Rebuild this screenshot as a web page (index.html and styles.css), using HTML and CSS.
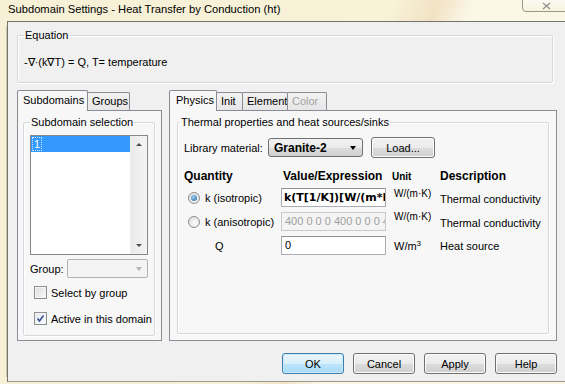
FILE: index.html
```html
<!DOCTYPE html>
<html>
<head>
<meta charset="utf-8">
<link rel="stylesheet" href="styles.css">
</head>
<body>
<div class="window">
  <div class="titlebar">
    <span class="title">Subdomain Settings - Heat Transfer by Conduction (ht)</span>
    <div class="close"><svg width="9" height="8" viewBox="0 0 9 8"><path d="M1 1 L8 7 M8 1 L1 7" stroke="#8f8f8f" stroke-width="1.2" fill="none"/></svg></div>
  </div>
  <div class="frame">
    <div class="client">
      <fieldset class="group eq">
        <legend>Equation</legend>
        <div class="eqtext">-&#8711;&middot;(k&#8711;T) = Q, T= temperature</div>
      </fieldset>

      <div class="panes">
        <div class="tabctl left">
          <div class="tabs">
            <div class="tab active t-sub">Subdomains</div>
            <div class="tab t-grp">Groups</div>
          </div>
          <div class="tabpanel">
            <fieldset class="group sel">
              <legend>Subdomain selection</legend>
              <div class="listbox">
                <div class="items">
                  <div class="item selected"><span class="focus">1</span></div>
                </div>
                <div class="vscroll">
                  <span class="arr up"></span>
                  <span class="arr down"></span>
                </div>
              </div>
              <div class="grouprow">
                <span class="lbl">Group:</span>
                <div class="combo disabled"><span class="carrow light"></span></div>
              </div>
              <label class="check first"><span class="box"></span>Select by group</label>
              <label class="check"><span class="box checked"><svg width="9" height="9" viewBox="0 0 9 9"><path d="M1.5 4.5 L3.5 7 L7.5 1.5" stroke="#3b4f8c" stroke-width="1.6" fill="none"/></svg></span>Active in this domain</label>
            </fieldset>
          </div>
        </div>

        <div class="tabctl right">
          <div class="tabs">
            <div class="tab active t-phy">Physics</div>
            <div class="tab t-init">Init</div>
            <div class="tab t-el">Element</div>
            <div class="tab t-col dis">Color</div>
          </div>
          <div class="tabpanel">
            <fieldset class="group thermal">
              <legend>Thermal properties and heat sources/sinks</legend>
              <div class="librow">
                <span class="lbl lib">Library material:</span>
                <div class="combo mat"><span class="ctext">Granite-2</span><span class="carrow"></span></div>
                <button class="btn load">Load...</button>
              </div>
              <div class="qtable">
                <div class="hd">Quantity</div>
                <div class="hd val">Value/Expression</div>
                <div class="hd unit">Unit</div>
                <div class="hd">Description</div>

                <div class="q"><span class="radio on"></span>k (isotropic)</div>
                <div class="inp bold">k(T[1/K])[W/(m*K)]</div>
                <div class="unit u">W/(m&middot;K)</div>
                <div class="desc">Thermal conductivity</div>

                <div class="q"><span class="radio"></span>k (anisotropic)</div>
                <div class="inp dis">400 0 0 0 400 0 0 0 400</div>
                <div class="unit u">W/(m&middot;K)</div>
                <div class="desc">Thermal conductivity</div>

                <div class="q qq">Q</div>
                <div class="inp">0</div>
                <div class="unit u3">W/m<sup>3</sup></div>
                <div class="desc d3">Heat source</div>
              </div>
            </fieldset>
          </div>
        </div>
      </div>

      <div class="buttons">
        <button class="btn def">OK</button>
        <button class="btn">Cancel</button>
        <button class="btn">Apply</button>
        <button class="btn">Help</button>
      </div>
    </div>
  </div>
</div>
</body>
</html>
```

FILE: styles.css
```css
* { box-sizing: border-box; }
html, body { margin: 0; padding: 0; }
body {
  font-family: "Liberation Sans", Arial, sans-serif;
  font-size: 11px;
  color: #000;
  background: #f0f0f0;
}
.window {
  width: 565px;
  height: 384px;
  overflow: hidden;
  position: relative;
  background: linear-gradient(112deg, #f6f1d6 0%, #f7f2d8 55%, #f2e2c4 61%, #fbf8e8 66%, #faf7e2 100%);
}
.titlebar {
  height: 21px;
  display: flex;
  align-items: center;
  padding-left: 8px;
  padding-bottom: 3px;
}
.title {
  font-size: 11.2px;
  color: #000;
}
.close {
  position: absolute;
  left: 522px;
  top: -2px;
  width: 60px;
  height: 14px;
  border: 1px solid #9a9789;
  border-radius: 0 0 0 4px;
  background: linear-gradient(#fdfcf3, #f6f3df);
  display: flex;
  justify-content: flex-start;
  align-items: center;
  padding: 2px 0 0 19px;
}
.frame {
  padding-left: 2px;
  height: 361px;
}
.client {
  margin-left: 5px;
  width: 600px;
  height: 361px;
  background: #f0f0f0;
  border-left: 1px solid #74736c;
  border-top: 1px solid #74736c;
  border-bottom: 1px solid #9a998f;
  padding: 7px 0 0 9px;
  box-shadow: -6px 0 0 -5px #c9c6b2;
}

/* group boxes */
fieldset.group {
  margin: 0;
  border: 1px solid #d5d9dc;
  box-shadow: inset 1px 1px 0 #fff, 1px 1px 0 #fff;
  border-radius: 2px;
  padding: 0 6px;
  min-width: 0;
}
fieldset.group legend {
  padding: 0 1px;
  line-height: 13px;
  font-size: 11px;
}
.eq {
  width: 536px;
  height: 54px;
}
.eqtext {
  margin-top: 14px;
  line-height: 13px;
}

/* panes */
.panes {
  display: flex;
  gap: 7px;
  margin-top: 7px;
}
.tabctl.left { width: 145px; }
.tabctl.right { width: 388px; }
.tabs {
  display: flex;
  align-items: flex-end;
  height: 20px;
}
.tab {
  height: 18px;
  border: 1px solid #898c95;
  border-bottom: none;
  background: linear-gradient(#f2f2f2, #e6e6e6);
  line-height: 16px;
  padding: 0 0 0 4px;
  margin-right: -1px;
  border-radius: 2px 2px 0 0;
  white-space: nowrap;
  overflow: hidden;
}
.tab.active {
  height: 21px;
  margin-bottom: -1px;
  background: #f7f7f7;
  position: relative;
  z-index: 1;
  padding-left: 5px;
  line-height: 18px;
}
.t-phy.active { padding-left: 6px; }
.t-sub { width: 71px; }
.t-grp { width: 43px; padding-left: 4px; }
.t-phy { width: 48px; }
.t-init { width: 27px; padding-left: 4px; }
.t-el { width: 46px; padding-left: 4px; }
.t-col { width: 40px; padding-left: 4px; }
.tab.dis { color: #a3a3a3; }

.tabpanel {
  height: 231px;
  border: 1px solid #898c95;
  background: #f7f7f7;
  padding: 5px 5px 0 5px;
}
.left .tabpanel { padding-right: 6px; }
.right .tabpanel { padding: 5px 7px 0 7px; }

/* subdomain selection */
.sel {
  height: 220px;
  padding: 0 2px 0 4px;
}
.listbox {
  margin-top: 6px;
  height: 120px;
  border: 1px solid #82878e;
  background: #fff;
  display: flex;
}
.items { flex: 1; padding: 0; }
.item {
  height: 16px;
  line-height: 16px;
  padding-left: 1px;
  color: #fff;
  background: #3399ff;
}
.focus {
  display: inline-block;
  line-height: 12px;
  padding: 0 1px;
  border: 1px dotted #cfe5ff;
}
.vscroll {
  width: 17px;
  background: linear-gradient(90deg, #eaeaea, #f4f4f4);
  border-left: 1px solid #f0f0f0;
  display: flex;
  flex-direction: column;
  justify-content: space-between;
  align-items: center;
  padding: 7px 0 7px 0;
}
.arr {
  width: 0; height: 0;
  border-left: 3px solid transparent;
  border-right: 3px solid transparent;
}
.arr.up { border-bottom: 3px solid #4d4d4d; }
.arr.down { border-top: 3px solid #4d4d4d; }

.grouprow {
  display: flex;
  align-items: center;
  margin-top: 4px;
  height: 19px;
}
.grouprow .lbl { width: 39px; }
.combo {
  height: 19px;
  border: 1px solid #adb2b5;
  border-radius: 2px;
  display: flex;
  align-items: center;
  justify-content: space-between;
}
.combo.disabled {
  width: 84px;
  background: #f4f4f4;
  justify-content: flex-end;
  padding-right: 5px;
}
.carrow {
  width: 0; height: 0;
  border-left: 3.5px solid transparent;
  border-right: 3.5px solid transparent;
  border-top: 4px solid #000;
}
.carrow.light { border-top-color: #b4b4b4; }

.check {
  display: flex;
  align-items: center;
  height: 13px;
  margin-left: 4px;
  margin-top: 13px;
  white-space: nowrap;
}
.check.first { margin-top: 8px; }
.box {
  flex: none;
  width: 13px;
  height: 13px;
  border: 1px solid #8e8f8f;
  background: linear-gradient(135deg, #dcdcdc, #fbfbfb);
  box-shadow: inset 0 0 0 1px #f4f4f4;
  margin-right: 4px;
  display: flex;
  align-items: center;
  justify-content: center;
}
.box.checked { background: linear-gradient(135deg, #e2e8f0, #fafcff); }

/* thermal group */
.thermal {
  height: 218px;
  padding: 0 8px 0 10px;
}
.thermal legend { margin-left: -4px; }
.librow {
  display: flex;
  align-items: center;
  margin-top: 8px;
  height: 21px;
}
.lib { width: 84px; }
.combo.mat {
  width: 95px;
  border: 1px solid #707070;
  border-radius: 3px;
  background: linear-gradient(#f2f2f2 0%, #ebebeb 50%, #dddddd 51%, #cfcfcf 100%);
  padding: 0 6px 0 5px;
  font-weight: bold;
  font-size: 12px;
}
.btn {
  font-family: "Liberation Sans", Arial, sans-serif;
  font-size: 11px;
  height: 21px;
  width: 62px;
  border: 1px solid #707070;
  border-radius: 3px;
  background: linear-gradient(#f2f2f2 0%, #ebebeb 50%, #dddddd 51%, #cfcfcf 100%);
  box-shadow: inset 0 0 0 1px #fcfcfc;
  padding: 0;
  color: #000;
}
.btn.load { margin-left: 8px; width: 64px; }
.btn.def {
  border-color: #3c7fb1;
  background: linear-gradient(#eaf6fd 0%, #d9f0fc 50%, #bee6fd 51%, #a7d9f5 100%);
  box-shadow: inset 0 0 0 1px #cfe9f8;
}

.qtable {
  display: grid;
  grid-template-columns: 97px 105px 54px auto;
  grid-template-rows: 20px 23px 25px 23px;
  align-items: center;
  margin-top: 8px;
}
.hd {
  font-weight: bold;
  font-size: 12px;
}
.hd.val { padding-left: 2px; }
.hd.unit { padding-left: 6px; }
.q {
  display: flex;
  align-items: center;
  padding-left: 4px;
  white-space: nowrap;
}
.qq { padding-left: 31px; }
.radio {
  flex: none;
  width: 12px;
  height: 12px;
  border-radius: 50%;
  border: 1px solid #8e8f8f;
  background: radial-gradient(circle at 60% 60%, #fdfdfd, #d8d8d8);
  margin-right: 5px;
  display: flex;
  align-items: center;
  justify-content: center;
}
.radio.on::after {
  content: "";
  width: 6px;
  height: 6px;
  border-radius: 50%;
  background: radial-gradient(circle at 40% 35%, #9fd2f5, #1f5f97);
}
.inp {
  height: 19px;
  border: 1px solid #abadb3;
  border-top-color: #8f9196;
  background: #fff;
  line-height: 17px;
  padding-left: 3px;
  white-space: nowrap;
  overflow: hidden;
}
.inp.bold { font-family: "DejaVu Sans", Verdana, sans-serif; font-weight: bold; font-size: 11px; padding-left: 2px; }
.inp.dis { background: #f4f4f4; color: #a0a0a0; border-color: #c7c9cc; }
.unit { padding-left: 8px; font-size: 10px; white-space: nowrap; }
.unit.u { align-self: start; padding-top: 2px; }
.unit.u3 { font-size: 11px; }
.unit sup { font-size: 8px; vertical-align: 4px; line-height: 0; }
.desc { padding-top: 3px; white-space: nowrap; }
.desc.d3 { padding-top: 0; }

.buttons {
  display: flex;
  justify-content: flex-end;
  gap: 9px;
  width: 540px;
  margin-top: 12px;
}
```
